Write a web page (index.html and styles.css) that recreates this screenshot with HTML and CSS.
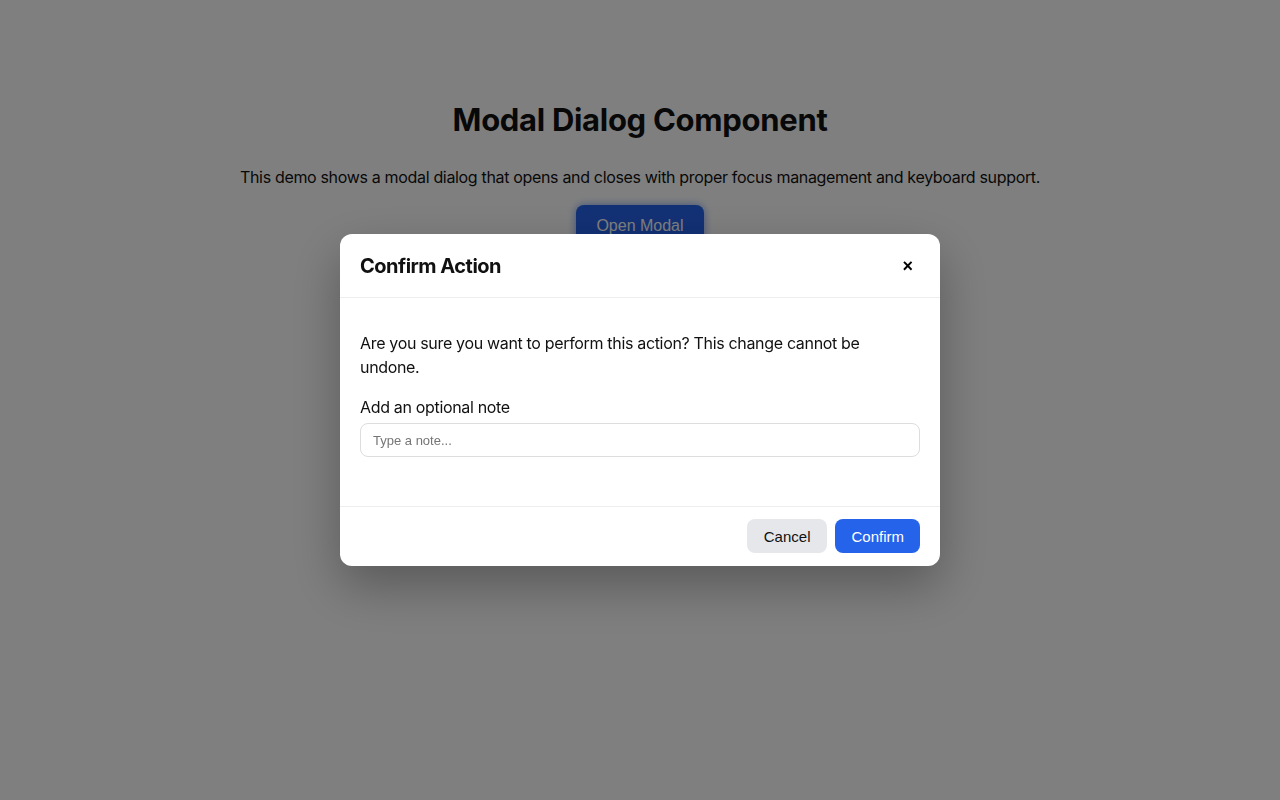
FILE: index.html
```html
<!DOCTYPE html>
<html lang="en">
<head>
<meta charset="utf-8">
<title>Modal Dialog Component</title>
<link rel="stylesheet" href="styles.css">
</head>
<body>
<main class="page">
  <h1 class="page-title">Modal Dialog Component</h1>
  <p class="page-desc">This demo shows a modal dialog that opens and closes with proper focus management and keyboard support.</p>
  <button class="open-btn" type="button">Open Modal</button>
</main>
<div class="overlay">
  <div class="modal" role="dialog" aria-modal="true" aria-labelledby="modal-title">
    <header class="modal-header">
      <h2 class="modal-title" id="modal-title">Confirm Action</h2>
      <button class="close-btn" type="button" aria-label="Close">×</button>
    </header>
    <div class="modal-body">
      <p class="modal-text">Are you sure you want to perform this action? This change cannot be undone.</p>
      <label class="field-label" for="note">Add an optional note</label>
      <input class="field-input" id="note" type="text" placeholder="Type a note...">
    </div>
    <footer class="modal-footer">
      <button class="btn btn-secondary" type="button">Cancel</button>
      <button class="btn btn-primary" type="button">Confirm</button>
    </footer>
  </div>
</div>
</body>
</html>
```
FILE: styles.css
```css
* { box-sizing: border-box; }
html, body { margin: 0; padding: 0; }
body {
  background: #ffffff;
  color: #111111;
  font-family: Inter, "Noto Sans", sans-serif;
  font-size: 16px;
  line-height: 24px;
  letter-spacing: -0.33px;
  height: 800px;
}
.page {
  display: flex;
  flex-direction: column;
  align-items: center;
  padding-top: 96px;
  text-align: center;
}
.page-title {
  margin: 0 0 21px;
  font-size: 31px;
  line-height: 48px;
  font-weight: 700;
  letter-spacing: -0.3px;
}
.page-desc {
  margin: 0 0 16px;
}
.open-btn {
  font-family: "Liberation Sans", Arial, sans-serif;
  font-size: 16px;
  letter-spacing: 0;
  height: 40px;
  padding: 2px 20px 0;
  border: none;
  border-radius: 8px;
  background: #2563eb;
  color: #ffffff;
  box-shadow: 0 0 8px rgba(37, 99, 235, 0.6);
}
.overlay {
  position: fixed;
  inset: 0;
  background: rgba(0, 0, 0, 0.5);
  display: flex;
  align-items: center;
  justify-content: center;
}
.modal {
  width: 600px;
  background: #ffffff;
  border-radius: 12px;
  box-shadow: 0 20px 50px rgba(0, 0, 0, 0.3);
  overflow: hidden;
}
.modal-header {
  display: flex;
  align-items: center;
  justify-content: space-between;
  height: 64px;
  padding: 0 22px 0 20px;
  border-bottom: 1px solid #eeeeee;
}
.modal-title {
  margin: 0;
  font-size: 20px;
  line-height: 24px;
  font-weight: 700;
  letter-spacing: -0.5px;
}
.close-btn {
  border: none;
  background: transparent;
  font-family: "Liberation Sans", Arial, sans-serif;
  font-size: 18px;
  font-weight: 700;
  line-height: 20px;
  letter-spacing: 0;
  padding: 2px 5px 2px 6px;
  color: #000;
}
.modal-body {
  padding: 33px 20px 49px;
  display: flex;
  flex-direction: column;
}
.modal-text {
  margin: 0 0 16px;
}
.field-label {
  margin-bottom: 4px;
}
.field-input {
  height: 34px;
  width: 100%;
  border: 1px solid #dddddd;
  border-radius: 8px;
  padding: 0 12px;
  font-family: "Liberation Sans", Arial, sans-serif;
  font-size: 13px;
  letter-spacing: 0;
  color: #111;
  background: #fff;
}
.field-input::placeholder { color: #757575; }
.modal-footer {
  display: flex;
  justify-content: flex-end;
  gap: 8px;
  padding: 12px 20px 13px;
  border-top: 1px solid #eeeeee;
}
.btn {
  height: 34px;
  border: none;
  border-radius: 8px;
  padding: 0 17px;
  font-family: "Liberation Sans", Arial, sans-serif;
  font-size: 15px;
  letter-spacing: 0;
}
.btn-secondary { background: #e5e7eb; color: #111; }
.btn-primary { background: #2563eb; color: #ffffff; padding: 0 16px; }
```
